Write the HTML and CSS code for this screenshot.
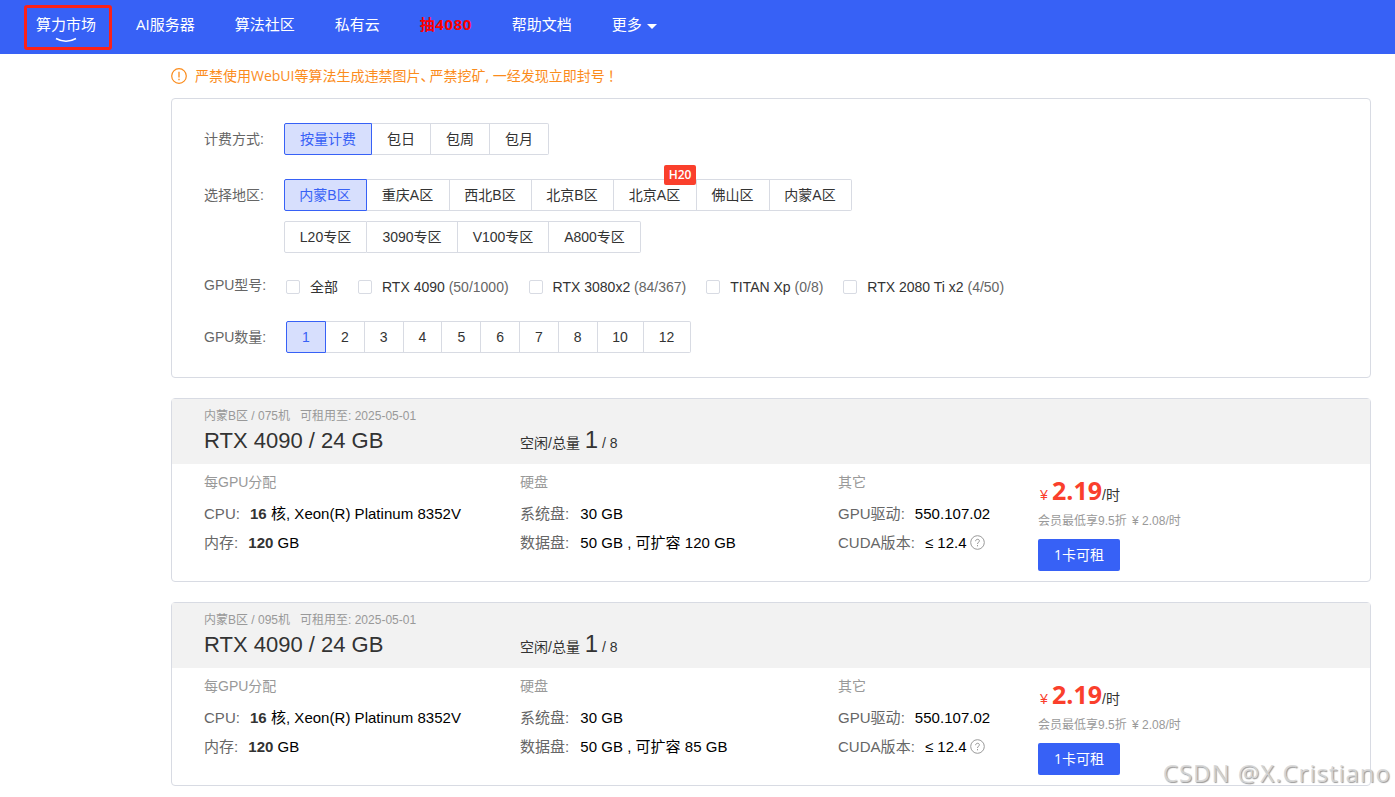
FILE: index.html
```html
<!DOCTYPE html>
<html lang="zh-CN">
<head>
    <meta charset="UTF-8">
    <meta name="viewport" content="width=device-width, initial-scale=1.0">
    <title>算力市场</title>
    <link rel="stylesheet" href="styles.css">
</head>
<body>
    <nav class="navbar">
        <a class="nav-item active">算力市场
            <svg class="smile" width="22" height="6" viewBox="0 0 22 6"><path d="M1 1.5Q11 7 21 1.5" fill="none" stroke="#fff" stroke-width="1.5"/></svg>
        </a>
        <a class="nav-item">AI服务器</a>
        <a class="nav-item">算法社区</a>
        <a class="nav-item">私有云</a>
        <a class="nav-item hot">抽4080</a>
        <a class="nav-item">帮助文档</a>
        <a class="nav-item more">更多<span class="caret"></span></a>
    </nav>

    <div class="container">
        <div class="notice">
            <svg width="16" height="16" viewBox="0 0 16 16" fill="none" stroke="#fb8c1c"><circle cx="8" cy="8" r="7.3" stroke-width="1.2"/><path d="M8 3.7V9.5M8 10.8V12.2" stroke-width="1.3"/></svg>
            <div class="notice-text">严禁使用WebUI等算法生成违禁图片<span class="half">、</span>严禁挖矿, 一经发现立即封号<span class="bang">！</span></div>
        </div>

        <div class="filter">
            <div class="row">
                <div class="label">计费方式:</div>
                <div class="group billing">
                    <button class="active">按量计费</button><button>包日</button><button>包周</button><button>包月</button>
                </div>
            </div>
            <div class="row region">
                <div class="label">选择地区:</div>
                <div>
                    <div class="group area">
                        <button class="active">内蒙B区</button><button>重庆A区</button><button>西北B区</button><button>北京B区</button><button>北京A区<span class="badge">H20</span></button><button>佛山区</button><button>内蒙A区</button>
                    </div>
                    <div class="group zone">
                        <button>L20专区</button><button>3090专区</button><button>V100专区</button><button>A800专区</button>
                    </div>
                </div>
            </div>
            <div class="row model">
                <div class="label">GPU型号:</div>
                <div class="checks">
                    <label class="check"><i></i><span>全部</span></label>
                    <label class="check"><i></i><span>RTX 4090 <em>(50/1000)</em></span></label>
                    <label class="check"><i></i><span>RTX 3080x2 <em>(84/367)</em></span></label>
                    <label class="check"><i></i><span>TITAN Xp <em>(0/8)</em></span></label>
                    <label class="check"><i></i><span>RTX 2080 Ti x2 <em>(4/50)</em></span></label>
                </div>
            </div>
            <div class="row count">
                <div class="label">GPU数量:</div>
                <div class="group num">
                    <button class="active">1</button><button>2</button><button>3</button><button>4</button><button>5</button><button>6</button><button>7</button><button>8</button><button>10</button><button>12</button>
                </div>
            </div>
        </div>

        <div class="machine">
            <div class="machine-head">
                <div>
                    <div class="meta"><span>内蒙B区 / 075机</span><span>可租用至: 2025-05-01</span></div>
                    <div class="title">RTX 4090 / 24 GB</div>
                </div>
                <div class="idle">空闲/总量 <span class="big">1</span> / 8</div>
            </div>
            <div class="machine-body">
                <div class="col">
                    <div class="col-title">每GPU分配</div>
                    <div class="spec"><span>CPU:</span><div><b>16</b> 核, Xeon(R) Platinum 8352V</div></div>
                    <div class="spec"><span>内存:</span><div><b>120</b> GB</div></div>
                </div>
                <div class="col">
                    <div class="col-title">硬盘</div>
                    <div class="spec disk"><span>系统盘:</span><div>30 GB</div></div>
                    <div class="spec disk"><span>数据盘:</span><div>50 GB , 可扩容 120 GB</div></div>
                </div>
                <div class="col">
                    <div class="col-title">其它</div>
                    <div class="spec"><span>GPU驱动:</span><div>550.107.02</div></div>
                    <div class="spec"><span>CUDA版本:</span><div>≤ 12.4</div><svg class="help" width="15" height="15" viewBox="0 0 15 15" fill="none" stroke="#999"><circle cx="7.5" cy="7.5" r="6.8"/><path d="M5.6 6.2C5.6 3.6 9.5 3.7 9.4 6C9.3 7.4 7.5 7.2 7.5 9M7.5 10V11.3"/></svg></div>
                </div>
                <div class="price">
                    <div class="amount"><span class="yen">¥</span><strong>2.19</strong>/时</div>
                    <div class="vip">会员最低享9.5折 <span class="vip-yen">¥</span> 2.08/时</div>
                    <button class="rent">1卡可租</button>
                </div>
            </div>
        </div>

        <div class="machine">
            <div class="machine-head">
                <div>
                    <div class="meta"><span>内蒙B区 / 095机</span><span>可租用至: 2025-05-01</span></div>
                    <div class="title">RTX 4090 / 24 GB</div>
                </div>
                <div class="idle">空闲/总量 <span class="big">1</span> / 8</div>
            </div>
            <div class="machine-body">
                <div class="col">
                    <div class="col-title">每GPU分配</div>
                    <div class="spec"><span>CPU:</span><div><b>16</b> 核, Xeon(R) Platinum 8352V</div></div>
                    <div class="spec"><span>内存:</span><div><b>120</b> GB</div></div>
                </div>
                <div class="col">
                    <div class="col-title">硬盘</div>
                    <div class="spec disk"><span>系统盘:</span><div>30 GB</div></div>
                    <div class="spec disk"><span>数据盘:</span><div>50 GB , 可扩容 85 GB</div></div>
                </div>
                <div class="col">
                    <div class="col-title">其它</div>
                    <div class="spec"><span>GPU驱动:</span><div>550.107.02</div></div>
                    <div class="spec"><span>CUDA版本:</span><div>≤ 12.4</div><svg class="help" width="15" height="15" viewBox="0 0 15 15" fill="none" stroke="#999"><circle cx="7.5" cy="7.5" r="6.8"/><path d="M5.6 6.2C5.6 3.6 9.5 3.7 9.4 6C9.3 7.4 7.5 7.2 7.5 9M7.5 10V11.3"/></svg></div>
                </div>
                <div class="price">
                    <div class="amount"><span class="yen">¥</span><strong>2.19</strong>/时</div>
                    <div class="vip">会员最低享9.5折 <span class="vip-yen">¥</span> 2.08/时</div>
                    <button class="rent">1卡可租</button>
                </div>
            </div>
        </div>
    </div>

    <div class="watermark">CSDN @X.Cristiano</div>
</body>
</html>
```

FILE: styles.css
```css
* {
    box-sizing: border-box;
}
body {
    margin: 0;
    height: 797px;
    overflow: hidden;
    background: #fff;
    color: #333;
    font-family: "Liberation Sans", "Noto Sans CJK SC", sans-serif;
    font-size: 14px;
}
button {
    font-family: inherit;
    font-size: 14px;
    padding: 0;
}

/* top bar */
.navbar {
    display: flex;
    height: 54px;
    padding: 5px 0 0 24px;
    background: #3761f6;
    color: #fff;
    font-family: "Open Sans", "Noto Sans CJK SC", sans-serif;
    font-size: 15px;
}
.nav-item {
    height: 45px;
    margin-right: 40px;
    line-height: 38px;
    white-space: nowrap;
}
.nav-item.active {
    position: relative;
    width: 88px;
    margin-right: 24px;
    padding-left: 9px;
    line-height: 32px;
    border: 3px solid #fb2118;
    border-radius: 3px;
}
.smile {
    position: absolute;
    left: 28px;
    bottom: 4px;
}
.nav-item.hot {
    width: 52px;
    color: #f00;
    font-weight: bold;
    letter-spacing: 0.6px;
}
.more {
    display: flex;
}
.caret {
    margin: 19px 0 0 5px;
    width: 10px;
    height: 5px;
    border: 5px solid transparent;
    border-top-color: #fff;
    border-bottom: 0;
}

.container {
    width: 1200px;
    margin-left: 171px;
}
.notice {
    display: flex;
    align-items: center;
    gap: 8px;
    height: 44px;
    color: #fb8c1c;
    font-family: "Open Sans", "Noto Sans CJK SC", sans-serif;
    white-space: nowrap;
}
.notice-text {
    padding-bottom: 2px;
}
.half {
    margin-right: 2px;
    font-feature-settings: "halt";
}
.bang {
    margin-left: 3px;
}

/* filters */
.filter {
    height: 280px;
    padding: 24px 32px;
    border: 1px solid #d8dbe3;
    border-radius: 4px;
}
.row {
    display: flex;
}
.label {
    width: 80px;
    line-height: 32px;
    color: #666;
}
.group {
    display: flex;
}
.group button {
    position: relative;
    height: 32px;
    line-height: 30px;
    border: 1px solid #d8dbe3;
    border-left-width: 0;
    background: #fff;
    color: #333;
    white-space: nowrap;
}
.group button:first-child {
    border-left-width: 1px;
    border-radius: 2px 0 0 2px;
}
.group button:last-child {
    border-radius: 0 2px 2px 0;
}
.group button.active {
    border-color: #3761f6;
    background: #d7dffd;
    color: #3761f6;
}
.billing button {
    width: 59px;
}
.billing button:first-child {
    width: 88px;
}
.region {
    margin-top: 24px;
}
.area button {
    width: 82px;
    padding-right: 1px;
}
.area button:first-child,
.area button:nth-child(2),
.area button:nth-child(5),
.zone button:first-child {
    width: 83px;
}
.area button:nth-child(6) {
    width: 73px;
}
.zone {
    margin-top: 10px;
}
.zone button {
    width: 91px;
}
.zone button:last-child {
    width: 92px;
}
.badge {
    position: absolute;
    right: 0;
    top: -15px;
    width: 32px;
    height: 20px;
    border-radius: 2px;
    background: #fa3f2c;
    color: #fff;
    font: 600 12px/20px "Open Sans", sans-serif;
}
.model {
    margin-top: 16px;
}
.checks {
    display: flex;
    gap: 20px;
    padding: 2px 0 0 2px;
}
.check {
    display: flex;
    align-items: center;
    height: 32px;
    line-height: 32px;
    white-space: nowrap;
}
.check i {
    width: 14px;
    height: 14px;
    margin-right: 10px;
    border: 1px solid #d8dbe3;
    border-radius: 2px;
}
.check em {
    color: #666;
    font-style: normal;
}
.count {
    margin-top: 18px;
}
.num {
    margin-left: 2px;
}
.num button {
    width: 38.8px;
}
.num button:first-child {
    width: 40px;
}
.num button:nth-child(9) {
    width: 46px;
}
.num button:nth-child(10) {
    width: 47px;
}

/* machine cards */
.machine {
    height: 184px;
    margin-top: 20px;
    border: 1px solid #d8dbe3;
    border-radius: 4px;
}
.machine-head {
    display: grid;
    grid-template-columns: 316px 1fr;
    height: 65px;
    padding: 9px 32px 0;
    background: #f2f2f2;
}
.meta {
    display: flex;
    gap: 10px;
    height: 17px;
    line-height: 17px;
    color: #999;
    font-size: 12px;
}
.title {
    line-height: 32px;
    font-size: 22px;
}
.idle {
    line-height: 32px;
    padding-top: 16px;
}
.big {
    margin-left: 1px;
    font-size: 24px;
}
.machine-body {
    display: grid;
    grid-template-columns: 316px 318px 200px 1fr;
    padding: 0 32px;
}
.col {
    padding-top: 8px;
    white-space: nowrap;
}
.col-title {
    height: 20px;
    margin-bottom: 7px;
    line-height: 20px;
    color: #999;
}
.spec {
    display: flex;
    align-items: center;
    height: 29px;
    line-height: 29px;
    font-size: 15px;
    letter-spacing: 0.03px;
    color: #000;
}
.spec span {
    margin-right: 10px;
    color: #666;
}
.spec.disk span {
    margin-right: 11px;
}
.spec b {
    color: #333;
}
.help {
    margin-left: 3px;
}
.price {
    padding-top: 9px;
}
.amount {
    height: 35px;
    line-height: 34px;
    white-space: nowrap;
}
.yen {
    display: inline-block;
    width: 14px;
    padding-left: 2px;
    color: #fa3f2c;
}
.amount strong {
    color: #fa3f2c;
    font: bold 25px/34px "Open Sans", sans-serif;
}
.vip {
    height: 24px;
    line-height: 26px;
    color: #999;
    font-size: 12px;
}
.vip-yen {
    margin-left: 2px;
}
.rent {
    display: block;
    width: 82px;
    height: 32px;
    margin-top: 7px;
    padding-bottom: 2px;
    border: 0;
    border-radius: 2px;
    background: #3761f6;
    color: #fff;
    font-family: "Open Sans", "Noto Sans CJK SC", sans-serif;
}

/* stamped over the bottom right corner */
.watermark {
    position: absolute;
    right: 4px;
    top: 758px;
    color: rgba(215, 215, 215, 0.9);
    font: 24px/30px "Open Sans", sans-serif;
    letter-spacing: 1px;
    text-shadow: 1px 1px 1px #999;
    white-space: nowrap;
}
```
